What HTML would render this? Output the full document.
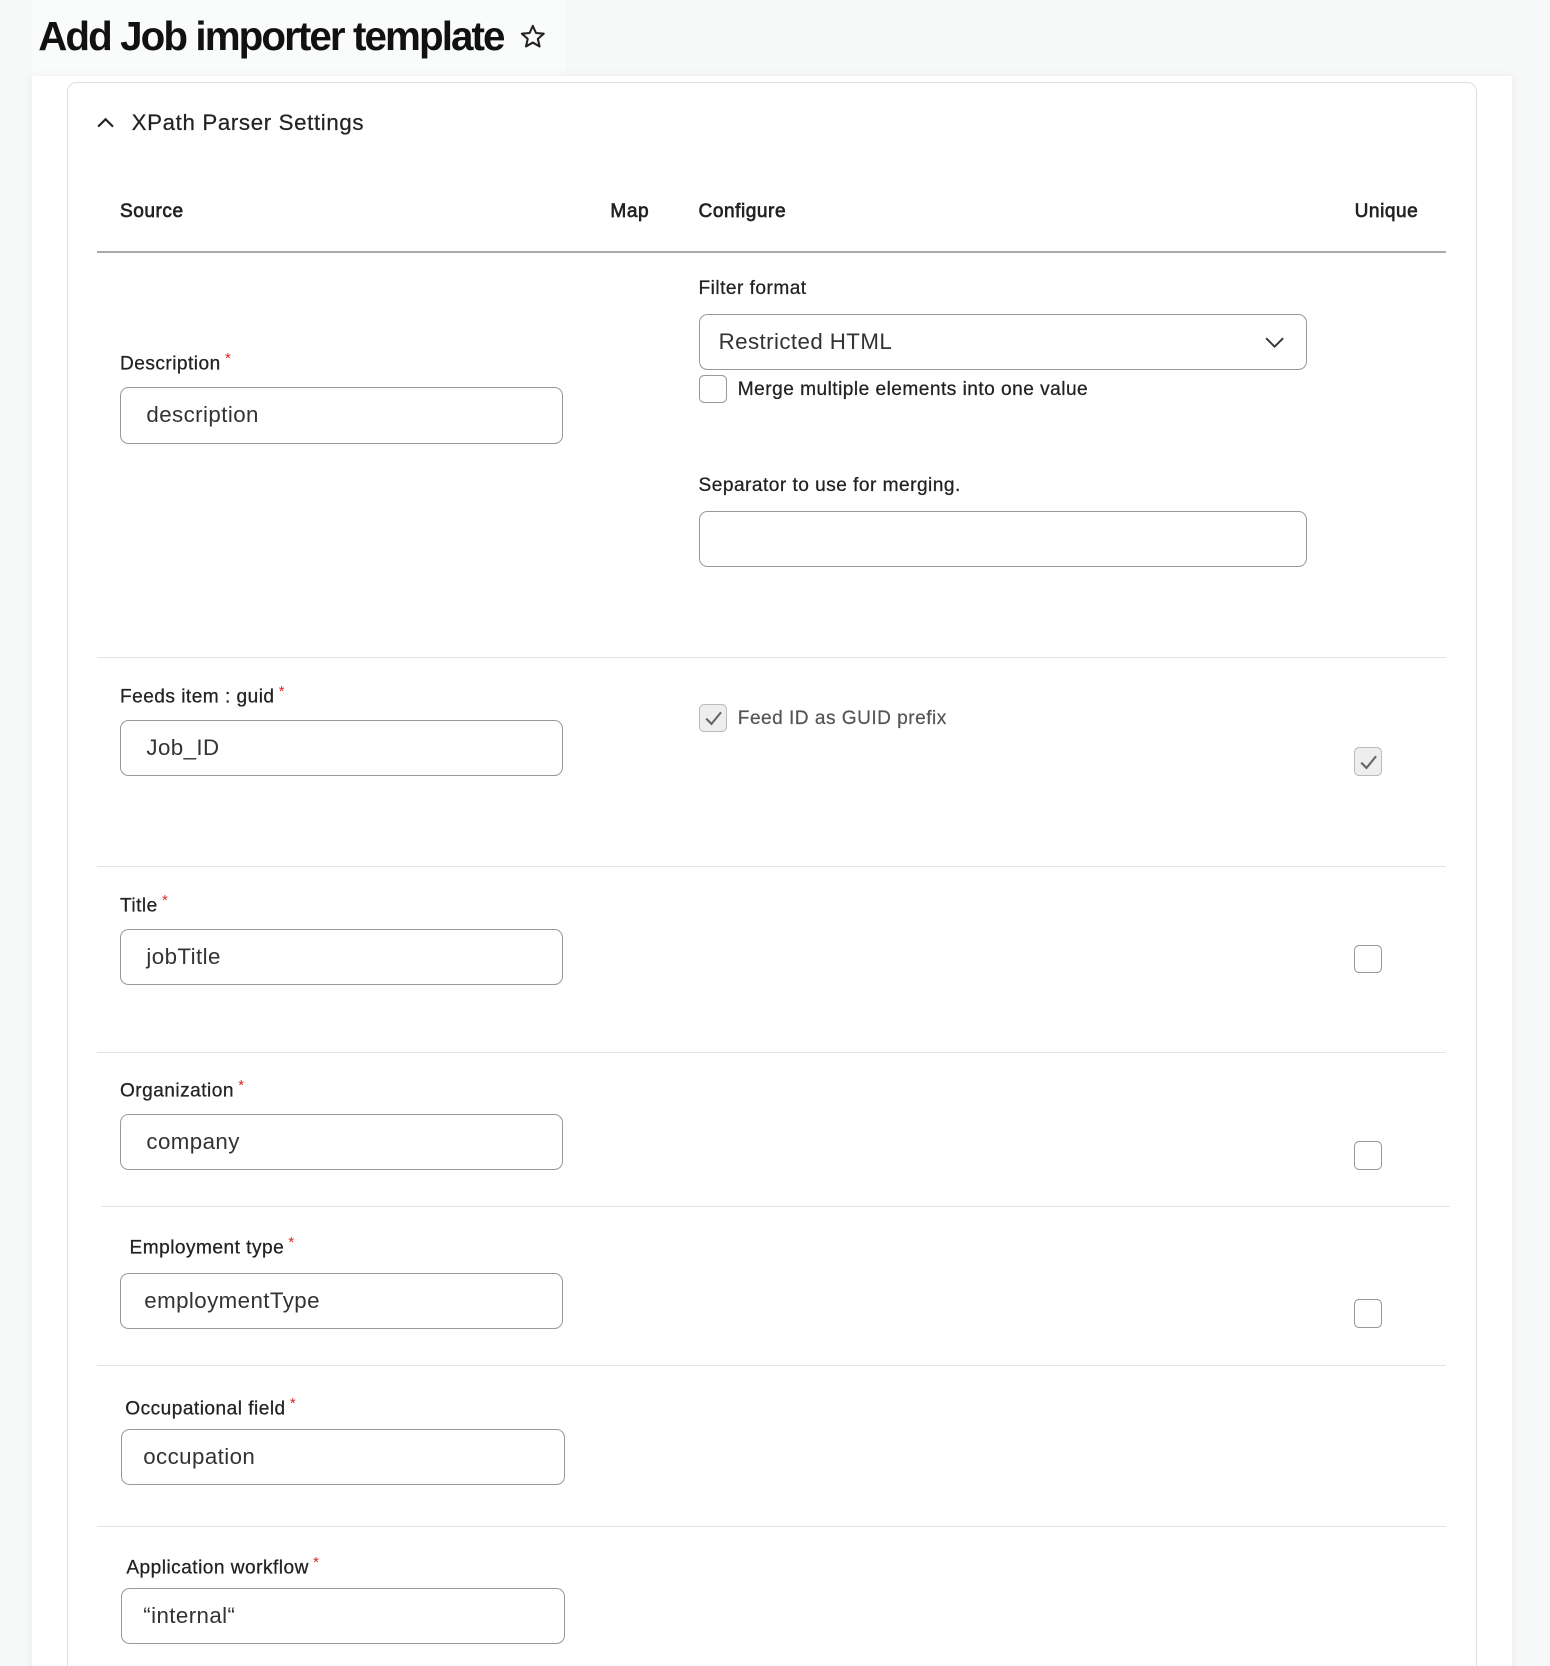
<!DOCTYPE html>
<html><head><meta charset="utf-8"><style>
html,body{margin:0;padding:0;}
html{width:1550px;height:1666px;overflow:hidden;background:#f7f8f8;}
body{width:1460px;height:1569px;overflow:hidden;background:#f7f8f8;font-family:"Liberation Sans",sans-serif;color:#222;zoom:1.0616;position:relative;}
.a{position:absolute;}
.page{left:30px;top:72px;width:1394px;height:1520px;background:#fff;box-shadow:0 0 8px rgba(0,0,0,.06);}
.card{left:63px;top:77px;width:1326px;height:1520px;border:1px solid #ddd;border-radius:9px;background:#fff;}
.lbl{font-size:18px;color:#222;letter-spacing:0.45px;-webkit-text-stroke:0.25px #222;}
.lbl b{color:#d22;font-weight:normal;font-size:14px;vertical-align:6px;margin-left:4px;-webkit-text-stroke:0;}
.in{border:1px solid #999;border-radius:8px;background:#fff;font-size:21px;color:#333;box-sizing:border-box;padding-left:24px;line-height:50px;letter-spacing:0.4px;}
.hr{height:1px;background:#e4e4e4;}
.cb{width:27px;height:27px;border:1px solid #999;border-radius:5px;box-sizing:border-box;background:#fff;}
.cb.ck{background:#eee;border-color:#bbb;}
.th{font-size:18px;color:#222;top:189px;letter-spacing:0.5px;-webkit-text-stroke:0.6px #222;}
</style></head><body>
<div class="a" style="left:30px;top:0;width:503px;height:78px;background:#fafbfb"></div>
<div class="a" style="left:36px;top:12px;font-size:38px;font-weight:bold;letter-spacing:-1.8px;color:#111;">Add Job importer template</div>
<svg class="a" style="left:489px;top:22px" width="26" height="26" viewBox="0 0 24 24"><path d="M12 2.5l2.8 6.2 6.7.6-5.1 4.5 1.5 6.6L12 17l-5.9 3.4 1.5-6.6-5.1-4.5 6.7-.6z" fill="none" stroke="#222" stroke-width="1.8" stroke-linejoin="round"/></svg>
<div class="a page"></div>
<div class="a card"></div>
<svg class="a" style="left:90px;top:108px" width="18" height="14" viewBox="0 0 18 14"><path d="M2 11L9 4l7 7" fill="none" stroke="#222" stroke-width="2"/></svg>
<div class="a" style="left:124px;top:104px;font-size:21px;color:#222;letter-spacing:0.6px;-webkit-text-stroke:0.2px #222;">XPath Parser Settings</div>
<div class="a th" style="left:113px">Source</div>
<div class="a th" style="left:575px">Map</div>
<div class="a th" style="left:658px">Configure</div>
<div class="a th" style="left:1276px">Unique</div>
<div class="a" style="left:91px;top:236px;width:1271px;height:2px;background:#aaa"></div>

<div class="a lbl" style="left:658px;top:262px">Filter format</div>
<div class="a in" style="left:658px;top:296px;width:573px;height:53px;padding-left:18px">Restricted HTML</div>
<svg class="a" style="left:1191px;top:316px" width="20" height="14" viewBox="0 0 20 14"><path d="M2 3l8 8 8-8" fill="none" stroke="#333" stroke-width="1.8"/></svg>
<div class="a cb" style="left:658px;top:353px"></div>
<div class="a lbl" style="left:695px;top:357px">Merge multiple elements into one value</div>
<div class="a lbl" style="left:658px;top:447px">Separator to use for merging.</div>
<div class="a in" style="left:658px;top:481px;width:573px;height:53px"></div>
<div class="a lbl" style="left:113px;top:331px">Description<b>*</b></div>
<div class="a in" style="left:113px;top:365px;width:417px;height:53px">description</div>
<div class="a hr" style="left:91px;top:619px;width:1271px"></div>

<div class="a lbl" style="left:113px;top:644px">Feeds item : guid<b>*</b></div>
<div class="a in" style="left:113px;top:678px;width:417px;height:53px">Job_ID</div>
<div class="a cb ck" style="left:658px;top:663px"></div>
<svg class="a" style="left:662px;top:667px" width="20" height="20" viewBox="0 0 20 20"><path d="M3 10l5 5 9-11" fill="none" stroke="#666" stroke-width="2"/></svg>
<div class="a lbl" style="left:695px;top:667px;color:#555;-webkit-text-stroke:0.2px #555">Feed ID as GUID prefix</div>
<div class="a cb ck" style="left:1275px;top:704px"></div>
<svg class="a" style="left:1279px;top:708px" width="20" height="20" viewBox="0 0 20 20"><path d="M3 10l5 5 9-11" fill="none" stroke="#666" stroke-width="2"/></svg>
<div class="a hr" style="left:91px;top:816px;width:1271px"></div>

<div class="a lbl" style="left:113px;top:841px">Title<b>*</b></div>
<div class="a in" style="left:113px;top:875px;width:417px;height:53px">jobTitle</div>
<div class="a cb" style="left:1275px;top:890px"></div>
<div class="a hr" style="left:91px;top:991px;width:1271px"></div>

<div class="a lbl" style="left:113px;top:1015px">Organization<b>*</b></div>
<div class="a in" style="left:113px;top:1049px;width:417px;height:53px">company</div>
<div class="a cb" style="left:1275px;top:1075px"></div>
<div class="a hr" style="left:95px;top:1136px;width:1271px"></div>

<div class="a lbl" style="left:122px;top:1163px">Employment type<b>*</b></div>
<div class="a in" style="left:113px;top:1199px;width:417px;height:53px;padding-left:22px">employmentType</div>
<div class="a cb" style="left:1275px;top:1224px"></div>
<div class="a hr" style="left:91px;top:1286px;width:1271px"></div>

<div class="a lbl" style="left:118px;top:1315px">Occupational field<b>*</b></div>
<div class="a in" style="left:114px;top:1346px;width:418px;height:53px;padding-left:20px">occupation</div>
<div class="a hr" style="left:91px;top:1437px;width:1271px"></div>

<div class="a lbl" style="left:119px;top:1465px">Application workflow<b>*</b></div>
<div class="a in" style="left:114px;top:1496px;width:418px;height:53px;padding-left:20px">“internal“</div>
</body></html>
